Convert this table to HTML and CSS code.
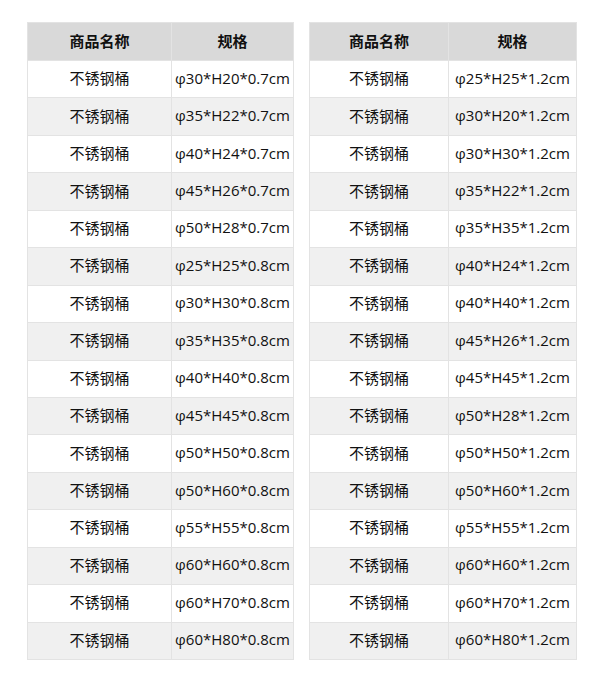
FILE: index.html
```html
<!DOCTYPE html>
<html lang="zh">
<head>
<meta charset="utf-8">
<title>不锈钢桶规格</title>
<link rel="stylesheet" href="styles.css">
</head>
<body>
<div class="wrap">
  <table class="spec spec-left">
    <colgroup><col class="c1"><col class="c2"></colgroup>
    <thead><tr><th>商品名称</th><th>规格</th></tr></thead>
    <tbody>
      <tr><td>不锈钢桶</td><td>φ30*H20*0.7cm</td></tr>
      <tr><td>不锈钢桶</td><td>φ35*H22*0.7cm</td></tr>
      <tr><td>不锈钢桶</td><td>φ40*H24*0.7cm</td></tr>
      <tr><td>不锈钢桶</td><td>φ45*H26*0.7cm</td></tr>
      <tr><td>不锈钢桶</td><td>φ50*H28*0.7cm</td></tr>
      <tr><td>不锈钢桶</td><td>φ25*H25*0.8cm</td></tr>
      <tr><td>不锈钢桶</td><td>φ30*H30*0.8cm</td></tr>
      <tr><td>不锈钢桶</td><td>φ35*H35*0.8cm</td></tr>
      <tr><td>不锈钢桶</td><td>φ40*H40*0.8cm</td></tr>
      <tr><td>不锈钢桶</td><td>φ45*H45*0.8cm</td></tr>
      <tr><td>不锈钢桶</td><td>φ50*H50*0.8cm</td></tr>
      <tr><td>不锈钢桶</td><td>φ50*H60*0.8cm</td></tr>
      <tr><td>不锈钢桶</td><td>φ55*H55*0.8cm</td></tr>
      <tr><td>不锈钢桶</td><td>φ60*H60*0.8cm</td></tr>
      <tr><td>不锈钢桶</td><td>φ60*H70*0.8cm</td></tr>
      <tr><td>不锈钢桶</td><td>φ60*H80*0.8cm</td></tr>
    </tbody>
  </table>
  <table class="spec spec-right">
    <colgroup><col class="c1"><col class="c2"></colgroup>
    <thead><tr><th>商品名称</th><th>规格</th></tr></thead>
    <tbody>
      <tr><td>不锈钢桶</td><td>φ25*H25*1.2cm</td></tr>
      <tr><td>不锈钢桶</td><td>φ30*H20*1.2cm</td></tr>
      <tr><td>不锈钢桶</td><td>φ30*H30*1.2cm</td></tr>
      <tr><td>不锈钢桶</td><td>φ35*H22*1.2cm</td></tr>
      <tr><td>不锈钢桶</td><td>φ35*H35*1.2cm</td></tr>
      <tr><td>不锈钢桶</td><td>φ40*H24*1.2cm</td></tr>
      <tr><td>不锈钢桶</td><td>φ40*H40*1.2cm</td></tr>
      <tr><td>不锈钢桶</td><td>φ45*H26*1.2cm</td></tr>
      <tr><td>不锈钢桶</td><td>φ45*H45*1.2cm</td></tr>
      <tr><td>不锈钢桶</td><td>φ50*H28*1.2cm</td></tr>
      <tr><td>不锈钢桶</td><td>φ50*H50*1.2cm</td></tr>
      <tr><td>不锈钢桶</td><td>φ50*H60*1.2cm</td></tr>
      <tr><td>不锈钢桶</td><td>φ55*H55*1.2cm</td></tr>
      <tr><td>不锈钢桶</td><td>φ60*H60*1.2cm</td></tr>
      <tr><td>不锈钢桶</td><td>φ60*H70*1.2cm</td></tr>
      <tr><td>不锈钢桶</td><td>φ60*H80*1.2cm</td></tr>
    </tbody>
  </table>
</div>
</body>
</html>
```
FILE: styles.css
```css
html, body {
  margin: 0;
  padding: 0;
  background: #ffffff;
}
body {
  font-family: "Open Sans", "Noto Sans CJK SC", sans-serif;
  font-size: 15px;
  color: #111111;
}
.wrap {
  display: flex;
  gap: 15px;
  padding: 22px 27px;
  align-items: flex-start;
}
.spec {
  border-collapse: collapse;
  table-layout: fixed;
  border: 1px solid #e3e3e3;
}
.spec-left { width: 267px; }
.spec-right { width: 268px; }
.spec-left .c1 { width: 144px; }
.spec-right .c1 { width: 139px; }
.spec th, .spec td {
  border: 1px solid #e3e3e3;
  text-align: center;
  padding: 0 0 3px;
  white-space: nowrap;
}
.spec th {
  background: #d9d9d9;
  font-weight: bold;
  height: 34px;
  font-family: "Noto Sans CJK SC", sans-serif;
}
.spec td {
  height: 33.44px;
}
.spec tbody tr:nth-child(even) td {
  background: #f0f0f0;
}
```
